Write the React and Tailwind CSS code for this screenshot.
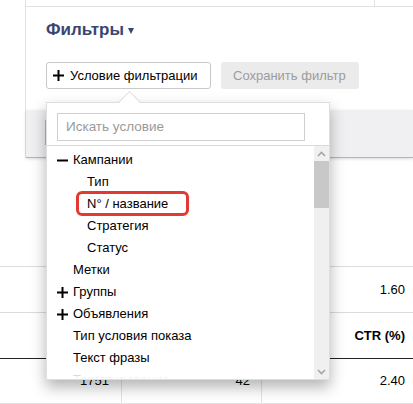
import React from 'react';

const campaignChildren = ['Тип', 'N° / название', 'Стратегия', 'Статус'];

const rootItems = [
  { label: 'Метки' },
  { label: 'Группы', icon: 'plus' },
  { label: 'Объявления', icon: 'plus' },
  { label: 'Тип условия показа' },
  { label: 'Текст фразы' },
  { label: 'Таргетирование' },
];

function PlusIcon({ className = '' }) {
  return (
    <svg width="11" height="11" viewBox="0 0 11 11" className={className}>
      <rect x="0" y="4.5" width="11" height="2" fill="#000" />
      <rect x="4.5" y="0" width="2" height="11" fill="#000" />
    </svg>
  );
}

function MinusIcon() {
  return (
    <svg width="11" height="11" viewBox="0 0 11 11">
      <rect x="0" y="4.5" width="11" height="2" fill="#000" />
    </svg>
  );
}

function Row({ label, icon, indent }) {
  return (
    <div className="flex h-[22px] items-center">
      <div className={`flex w-[16px] shrink-0 items-center ${indent ? 'ml-[14px]' : ''}`}>
        {icon === 'plus' && <PlusIcon />}
        {icon === 'minus' && <MinusIcon />}
      </div>
      <span className="whitespace-nowrap">{label}</span>
    </div>
  );
}

function ConditionPopup() {
  return (
    <div className="absolute left-[46px] top-[102px] h-[278px] w-[284px] border border-[#dedede] bg-white shadow-[0_7px_14px_rgba(0,0,0,0.3)]">
      {/* little arrow pointing at the button */}
      <div className="absolute left-[75px] top-[-9px] h-[15px] w-[15px] rotate-45 border-l border-t border-[#dedede] bg-white" />

      <div className="relative h-[43px] border-b border-[#d9d9d9] px-[10px] pt-[10px]">
        <div className="flex h-[28px] w-[248px] items-center border border-[#cfcfcf] px-[8px] text-[13.5px] text-[#9a9a9a]">
          Искать условие
        </div>
      </div>

      <div className="relative flex h-[233px]">
        <div className="relative flex-1 overflow-hidden pl-[10px] pt-[3px] text-[13px] text-black">
          <Row label="Кампании" icon="minus" />
          {campaignChildren.map((label) => (
            <Row key={label} label={label} indent />
          ))}
          {rootItems.map((item) => (
            <Row key={item.label} label={item.label} icon={item.icon} />
          ))}
          <div className="absolute bottom-0 left-0 h-[14px] w-full bg-gradient-to-b from-white/40 to-white" />

          {/* highlight frame */}
          <div className="absolute left-[29px] top-[45px] h-[25px] w-[113px] rounded-[6px] border-[3px] border-[#e23a31]" />
        </div>

        <div className="flex w-[15px] flex-col bg-[#f0f0f0]">
          <div className="flex h-[15px] items-center justify-center">
            <svg width="9" height="6" viewBox="0 0 9 6">
              <path d="M1 5 L4.5 1.5 L8 5" fill="none" stroke="#a6a6a6" strokeWidth="1.6" />
            </svg>
          </div>
          <div className="h-[47px] bg-[#c8c8c8]" />
          <div className="flex-1" />
          <div className="flex h-[15px] items-center justify-center">
            <svg width="9" height="6" viewBox="0 0 9 6">
              <path d="M1 1 L4.5 4.5 L8 1" fill="none" stroke="#a6a6a6" strokeWidth="1.6" />
            </svg>
          </div>
        </div>
      </div>
    </div>
  );
}

export default function App() {
  return (
    <div
      className="relative h-[404px] w-[413px] overflow-hidden bg-white text-[13px] text-black"
      style={{ fontFamily: '"Liberation Sans", Arial, sans-serif' }}
    >
      {/* top strip of the previous block */}
      <div className="ml-[25px] flex h-[6px] border-l border-[#e3e3e3]">
        <div className="w-[349px] border-r border-[#e3e3e3]" />
      </div>

      {/* filters panel */}
      <div className="ml-[25px] border-l border-t border-[#e3e3e3]">
        <div className="pl-[20px] pt-[13px]">
          <div className="flex h-[20px] items-center gap-[4px]">
            <span className="text-[17px] font-bold text-[#3a4570]">Фильтры</span>
            <span className="mt-[1px] border-x-[3px] border-t-[6px] border-x-transparent border-t-[#3a4570]" />
          </div>
          <div className="mt-[22px] flex gap-[10px]">
            <div className="flex h-[27px] w-[165px] items-center rounded-[3px] border border-[#c9c9c9] pl-[6px]">
              <PlusIcon className="mr-[6px]" />
              <span className="whitespace-nowrap">Условие фильтрации</span>
            </div>
            <div className="flex h-[27px] w-[138px] items-center rounded-[3px] bg-[#ebebeb] pl-[12px] text-[#9c9c9c]">
              Сохранить фильтр
            </div>
          </div>
        </div>
        <div className="mt-[21px] h-[48px] border-b border-[#b4b4b4] bg-[#f0f0f2] pt-[10px] shadow-[0_1px_3px_rgba(0,0,0,0.15)]">
          <div className="ml-[19px] h-[25px] w-[2px] bg-[#f2c200]" />
        </div>
      </div>

      {/* statistics table below */}
      <div className="h-[108px]" />
      <div className="flex h-[46px] items-center justify-end border-t border-[#dcdcdc] pr-[8px]">1.60</div>
      <div className="flex h-[46px] items-center justify-end border-t border-[#dcdcdc] pr-[8px] font-bold">CTR (%)</div>
      <div className="flex h-[46px] border-y border-t-[#222] border-b-[#e3e3e3]">
        <div className="flex w-[122px] items-end justify-end border-r border-[#e3e3e3] pb-[13px] pr-[12px]">1751</div>
        <div className="flex w-[140px] items-end justify-end border-r border-[#e3e3e3] pb-[13px] pr-[11px]">42</div>
        <div className="flex flex-1 items-center justify-end pr-[8px]">2.40</div>
      </div>

      <ConditionPopup />
    </div>
  );
}
